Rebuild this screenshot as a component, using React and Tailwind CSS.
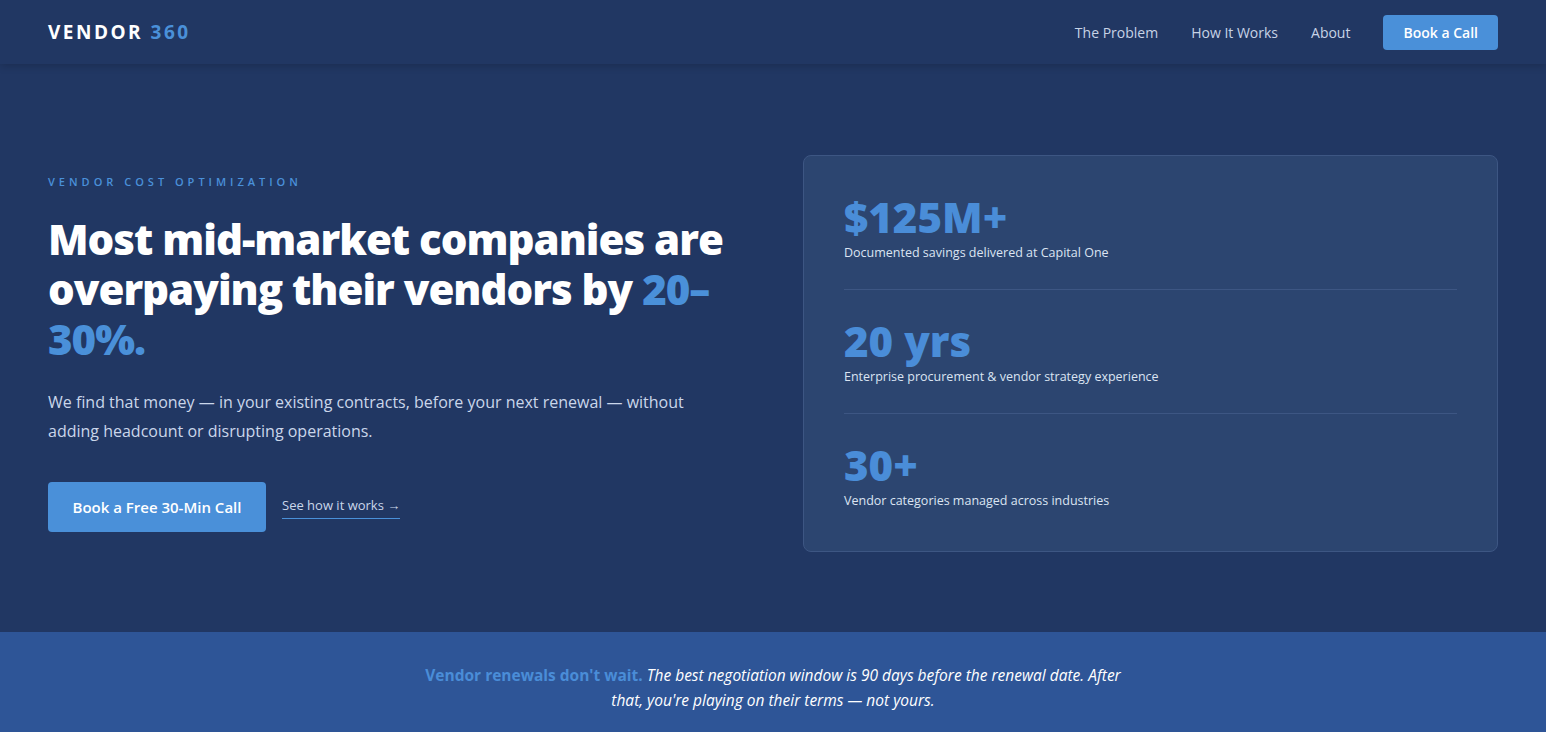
export default function App() {
  const stats = [
    { value: '$125M+', label: 'Documented savings delivered at Capital One' },
    { value: '20 yrs', label: 'Enterprise procurement & vendor strategy experience' },
    { value: '30+', label: 'Vendor categories managed across industries' },
  ]

  return (
    <div className="min-h-screen bg-[#213763] text-white font-['Segoe_UI','Open_Sans',sans-serif]">
      {/* Top navigation */}
      <header className="relative z-10 h-16 bg-[#213763] shadow-[0_2px_8px_rgba(0,0,0,0.18)]">
        <div className="flex h-full items-center justify-between px-12">
          <div className="text-[19px] font-bold tracking-[2.5px]">
            VENDOR <span className="text-[#4a90d9]">360</span>
          </div>
          <nav className="flex items-center gap-[33px] text-[14px] text-[#c7d3e6]">
            <a href="#problem">The Problem</a>
            <a href="#how">How It Works</a>
            <a href="#about">About</a>
            <a href="#call" className="rounded bg-[#4a90d9] px-5 py-[7px] font-semibold text-white">
              Book a Call
            </a>
          </nav>
        </div>
      </header>

      {/* Hero */}
      <section className="grid h-[568px] grid-cols-2 items-center gap-[60px] px-12 pt-[10px]">
        <div>
          <p className="text-[11px] font-semibold tracking-[4px] text-[#4a90d9]">
            VENDOR COST OPTIMIZATION
          </p>
          <h1 className="mt-6 text-[42px] font-extrabold leading-[50px] tracking-[-1px]">
            Most mid-market companies are overpaying their vendors by{' '}
            <span className="text-[#4a90d9]">20–30%.</span>
          </h1>
          <p className="mt-6 max-w-[680px] text-[16px] leading-[29px] text-[#cad6ea]">
            We find that money — in your existing contracts, before your next renewal — without
            adding headcount or disrupting operations.
          </p>
          <div className="mt-9 flex items-center gap-4">
            <a href="#call" className="flex h-[50px] w-[218px] items-center justify-center rounded bg-[#4a90d9] text-[15px] font-semibold text-white">
              Book a Free 30-Min Call
            </a>
            <a href="#how" className="border-b border-[#4a90d9] pb-0.5 text-[13px] text-[#cad6ea]">
              See how it works →
            </a>
          </div>
        </div>

        <div className="rounded-lg border border-[#3d5683] bg-[#2c4570] px-10 pt-[38px] pb-10">
          {stats.map((s, i) => (
            <div
              key={s.value}
              className={
                (i > 0 ? 'pt-7 ' : '') +
                (i < stats.length - 1 ? 'border-b border-[#3d5683] pb-[26px]' : '')
              }
            >
              <div className="text-[42px] font-extrabold leading-[46px] text-[#4a8dd8]">{s.value}</div>
              <div className="mt-[3px] text-[12.5px] leading-5 text-[#dbe4f2]">{s.label}</div>
            </div>
          ))}
        </div>
      </section>

      {/* Renewal banner */}
      <section className="bg-[#2e5597] px-12 pt-[31px] pb-9">
        <p className="mx-auto max-w-[700px] text-center text-[15.5px] leading-[25px] italic text-white">
          <span className="font-bold not-italic text-[#4a8dd8]">Vendor renewals don't wait.</span>{' '}
          The best negotiation window is 90 days before the renewal date. After that, you're playing
          on their terms — not yours.
        </p>
      </section>
    </div>
  )
}
